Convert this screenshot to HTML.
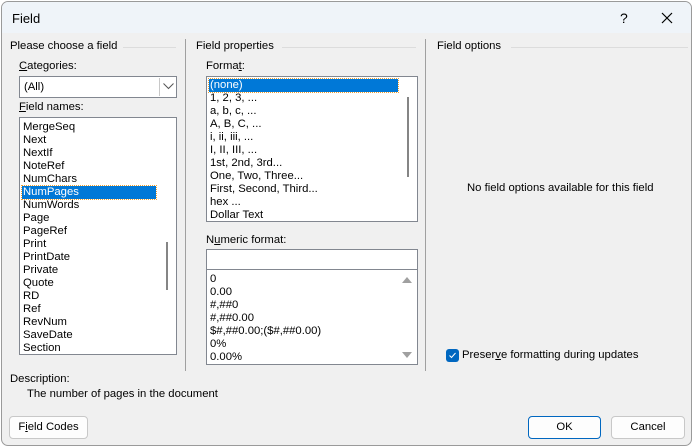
<!DOCTYPE html>
<html><head><style>
*{margin:0;padding:0;box-sizing:border-box}
body{width:694px;height:448px;background:#fff;position:relative;overflow:hidden;font-family:"Liberation Sans",sans-serif;font-size:11.3px;color:#000}
.dlg{position:absolute;left:1px;top:1px;width:691px;height:445px;background:#f0f0f0;border:1px solid #9a9a9a;border-radius:7px;overflow:hidden}
.tb{position:absolute;left:0;top:0;right:0;height:31px;background:#eff4f9}
.a{position:absolute;white-space:nowrap}
.ln{position:absolute;height:1px;background:#dcdcdc}
.vs{position:absolute;width:1px;background:#a0a0a0}
.box{position:absolute;background:#fff;border:1px solid #828790}
.it{position:absolute;left:3px;height:13px;line-height:13px;white-space:nowrap}
.sel{background:#0078d7;color:#fff;outline:1px dotted #f0a030}
.thumb{position:absolute;width:2px;background:#858585}
.btn{position:absolute;height:23px;background:#fdfdfd;border:1px solid #c8c8c8;border-radius:4px;text-align:center;line-height:21px}
u{text-decoration:underline}
</style></head><body>
<div class="dlg">
<div class="tb"></div>
<div class="a" style="left:10px;top:9px;font-size:13px">Field</div>
<div class="a" style="left:618px;top:8px;font-size:14px">?</div>
<svg class="a" style="left:659px;top:10px" width="12" height="12"><path d="M1 1L11 11M11 1L1 11" stroke="#000" stroke-width="1.2"/></svg>

<div class="a" style="left:8px;top:38px">Please choose a field</div>
<div class="ln" style="left:121px;top:45px;width:53px"></div>
<div class="vs" style="left:183px;top:37px;height:332px"></div>
<div class="a" style="left:17px;top:58px"><u>C</u>ategories:</div>
<div class="box" style="left:17px;top:74px;width:158px;height:22px"><span class="a" style="left:4px;top:4px">(All)</span>
<div style="position:absolute;left:139px;top:1px;width:1px;height:18px;background:#c8c8c8"></div>
<svg class="a" style="left:143px;top:6px" width="11" height="7"><path d="M0.5 0.5L5.5 5.5L10.5 0.5" stroke="#555" fill="none"/></svg></div>
<div class="a" style="left:17px;top:99px"><u>F</u>ield names:</div>
<div class="box" style="left:17px;top:115px;width:158px;height:238px">
<div class="it" style="top:3px">MergeSeq</div><div class="it" style="top:16px">Next</div><div class="it" style="top:29px">NextIf</div><div class="it" style="top:42px">NoteRef</div><div class="it" style="top:55px">NumChars</div>
<div class="it sel" style="top:68px;left:2px;width:134px;padding-left:1px">NumPages</div>
<div class="it" style="top:81px">NumWords</div><div class="it" style="top:94px">Page</div><div class="it" style="top:107px">PageRef</div><div class="it" style="top:120px">Print</div><div class="it" style="top:133px">PrintDate</div><div class="it" style="top:146px">Private</div><div class="it" style="top:159px">Quote</div><div class="it" style="top:172px">RD</div><div class="it" style="top:185px">Ref</div><div class="it" style="top:198px">RevNum</div><div class="it" style="top:211px">SaveDate</div><div class="it" style="top:224px">Section</div>
<div class="thumb" style="left:146px;top:124px;height:48px"></div>
</div>

<div class="a" style="left:194px;top:38px">Field properties</div>
<div class="ln" style="left:280px;top:45px;width:134px"></div>
<div class="a" style="left:204px;top:58px">Forma<u>t</u>:</div>
<div class="box" style="left:204px;top:74px;width:212px;height:146px">
<div class="it sel" style="top:2px;left:2px;width:189px;padding-left:1px">(none)</div>
<div class="it" style="top:15px">1, 2, 3, ...</div><div class="it" style="top:28px">a, b, c, ...</div><div class="it" style="top:41px">A, B, C, ...</div><div class="it" style="top:54px">i, ii, iii, ...</div><div class="it" style="top:67px">I, II, III, ...</div><div class="it" style="top:80px">1st, 2nd, 3rd...</div><div class="it" style="top:93px">One, Two, Three...</div><div class="it" style="top:106px">First, Second, Third...</div><div class="it" style="top:119px">hex ...</div><div class="it" style="top:132px">Dollar Text</div>
<div class="thumb" style="left:200px;top:20px;height:80px"></div>
</div>
<div class="a" style="left:204px;top:232px">N<u>u</u>meric format:</div>
<div class="box" style="left:204px;top:247px;width:212px;height:21px"></div>
<div class="box" style="left:204px;top:267px;width:212px;height:96px">
<div class="it" style="top:3px">0</div><div class="it" style="top:16px">0.00</div><div class="it" style="top:29px">#,##0</div><div class="it" style="top:42px">#,##0.00</div><div class="it" style="top:55px">$#,##0.00;($#,##0.00)</div><div class="it" style="top:68px">0%</div><div class="it" style="top:81px">0.00%</div>
<svg class="a" style="left:195px;top:7px" width="10" height="6"><path d="M0 6L5 0L10 6Z" fill="#a0a0a0"/></svg>
<svg class="a" style="left:195px;top:82px" width="10" height="6"><path d="M0 0L5 6L10 0Z" fill="#a0a0a0"/></svg>
</div>
<div class="vs" style="left:423px;top:37px;height:332px"></div>

<div class="a" style="left:435px;top:38px">Field options</div>
<div class="ln" style="left:509px;top:45px;width:177px"></div>
<div class="a" style="left:465px;top:180px">No field options available for this field</div>
<div class="a" style="left:444px;top:347px;width:13px;height:13px;background:#0067c0;border-radius:3px"><svg width="13" height="13"><path d="M3.5 6.5L5.5 8.5L9.5 4" stroke="#fff" fill="none" stroke-width="1"/></svg></div>
<div class="a" style="left:460px;top:347px">Preser<u>v</u>e formatting during updates</div>

<div class="a" style="left:8px;top:371px">Description:</div>
<div class="a" style="left:25px;top:386px">The number of pages in the document</div>

<div class="btn" style="left:7px;top:414px;width:79px">F<u>i</u>eld Codes</div>
<div class="btn" style="left:526px;top:414px;width:73px;border-color:#0067c0">OK</div>
<div class="btn" style="left:609px;top:414px;width:74px">Cancel</div>
</div>
</body></html>
